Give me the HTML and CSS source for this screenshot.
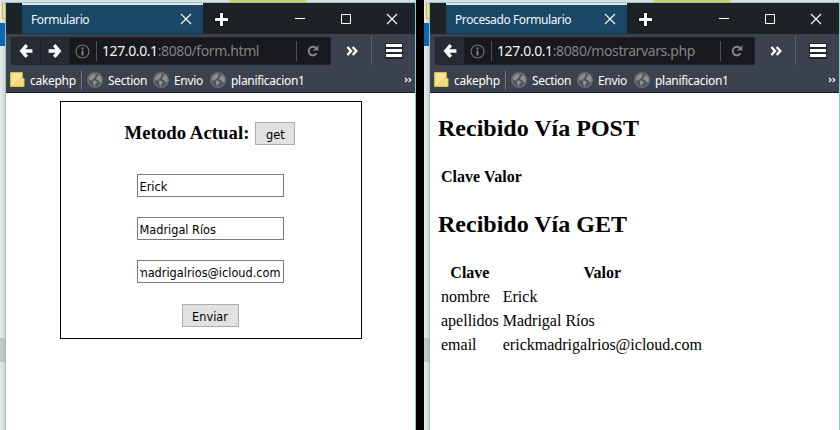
FILE: index.html
```html
<!DOCTYPE html>
<html lang="es">
<head>
<meta charset="utf-8">
<title>Formulario</title>
<link rel="stylesheet" href="styles.css">
</head>
<body>
<svg class="defs" width="0" height="0">
  <symbol id="close" viewBox="0 0 12 12"><path d="M1 1L11 11M11 1L1 11" fill="none" stroke="#fff" stroke-width="1.1"/></symbol>
  <symbol id="plus" viewBox="0 0 15 15"><path d="M7.5 0v15M0 7.5h15" fill="none" stroke="#0d1114" stroke-width="5"/><path d="M7.5 1v13M1 7.5h13" fill="none" stroke="#fff" stroke-width="3"/></symbol>
  <symbol id="min" viewBox="0 0 12 12"><path d="M1 5.5h10" stroke="#fff"/></symbol>
  <symbol id="max" viewBox="0 0 12 12"><path d="M1.5 1.5h9v9h-9z" fill="none" stroke="#fff"/></symbol>
  <symbol id="back" viewBox="0 0 14 14"><path d="M7.8 1.2L2.8 7l5 5.8M3 7h10.4" fill="none" stroke="#fff" stroke-width="3.4"/></symbol>
  <symbol id="info" viewBox="0 0 15 15"><circle cx="7.5" cy="7.5" r="6.5" fill="none" stroke="#777" stroke-width="1.1"/><path d="M7.5 6.5v5M7.5 3.6v1.8" stroke="#888" stroke-width="1.8"/></symbol>
  <symbol id="reload" viewBox="0 0 12 12"><path d="M9.6 8.3A4.3 4.3 0 1 1 8.6 2.6" fill="none" stroke="#848484" stroke-width="2"/><path d="M11.4 0v5.6H5.8z" fill="#848484"/></symbol>
  <symbol id="more" viewBox="0 0 12 10"><path d="M1.4 1L5 5 1.4 9M6.7 1L10.3 5 6.7 9" fill="none" stroke="#fff" stroke-width="2.4"/></symbol>
  <symbol id="more-thin" viewBox="0 0 8 6"><path d="M1 .8L3.2 3 1 5.2M4.6 .8L6.8 3 4.6 5.2" fill="none" stroke="#fff" stroke-width="1.2"/></symbol>
  <symbol id="menu" viewBox="0 0 18 16"><path d="M0 0h18v16H0z" fill="#23282f"/><path d="M1 2.5h16M1 7.5h16M1 12.5h16" stroke="#fff" stroke-width="3"/></symbol>
  <symbol id="folder" viewBox="0 0 15 16"><path d="M.5.5h11.8v6h1.7v8H.5z" fill="#f4e084" stroke="#d9bd4c"/><path d="M2 1.5h9v11L2 14z" fill="#f8e896"/><path d="M1 14L11 5v9z" fill="#eed36c" opacity=".7"/></symbol>
  <symbol id="globe" viewBox="0 0 16 16"><circle cx="8" cy="8" r="7.3" fill="#50555b" stroke="#787c80" stroke-width="1.1"/><path d="M2.5 5L5 2.4l3-.6L9 3 7.4 4.4l.4 1.7-2 .6L5 8.4 3 8 1.9 9zM6 8.5l3 .5 1 1.7-1.8 1.4-.4 2.3-1.7-2.3zM10 4.5l2.4-1.3 1.8 2.3.4 3.4-1.7 2.4-1-2.5-2-.8-.6-1.6z" fill="#8d9194"/></symbol>
</svg>

<div class="desktop">
  <section class="pane">
    <div class="window">
      <header class="titlebar">
        <div class="tab"><span>Formulario</span><svg width="12" height="12"><use href="#close"/></svg></div>
        <svg class="plus" width="15" height="15"><use href="#plus"/></svg>
        <div class="controls"><svg width="12" height="12"><use href="#min"/></svg><svg width="12" height="12"><use href="#max"/></svg><svg width="12" height="12"><use href="#close"/></svg></div>
      </header>
      <nav class="toolbar">
        <div class="location">
          <span class="navbtn"><svg width="14" height="14"><use href="#back"/></svg></span>
          <span class="navbtn"><svg class="flip" width="14" height="14"><use href="#back"/></svg></span>
          <svg class="info" width="15" height="15"><use href="#info"/></svg>
          <span class="url"><b>127.0.0.1</b>:8080/form.html</span>
          <span class="reload"><svg width="12" height="12"><use href="#reload"/></svg></span>
        </div>
        <svg class="more" width="12" height="10"><use href="#more"/></svg>
        <span class="menu"><svg width="18" height="16"><use href="#menu"/></svg></span>
      </nav>
      <div class="bookmarks">
        <svg width="15" height="16"><use href="#folder"/></svg><span class="b-cake">cakephp</span>
        <svg width="16" height="16"><use href="#globe"/></svg><span class="b-section">Section</span>
        <svg width="16" height="16"><use href="#globe"/></svg><span class="b-envio">Envio</span>
        <svg width="16" height="16"><use href="#globe"/></svg><span class="b-plan">planificacion1</span>
        <svg class="overflow" width="8" height="6"><use href="#more-thin"/></svg>
      </div>
      <main class="page">
        <div class="form">
          <h3><span>Metodo Actual:</span><span class="button get">get</span></h3>
          <div class="field">Erick</div>
          <div class="field">Madrigal Ríos</div>
          <div class="field"><div class="clip"><span>erickmadrigalrios@icloud.com</span></div></div>
          <span class="button send">Enviar</span>
        </div>
      </main>
    </div>
  </section>

  <section class="pane">
    <div class="window">
      <header class="titlebar">
        <div class="tab"><span>Procesado Formulario</span><svg width="12" height="12"><use href="#close"/></svg></div>
        <svg class="plus" width="15" height="15"><use href="#plus"/></svg>
        <div class="controls"><svg width="12" height="12"><use href="#min"/></svg><svg width="12" height="12"><use href="#max"/></svg><svg width="12" height="12"><use href="#close"/></svg></div>
      </header>
      <nav class="toolbar">
        <div class="location">
          <span class="navbtn"><svg width="14" height="14"><use href="#back"/></svg></span>
          <svg class="info" width="15" height="15"><use href="#info"/></svg>
          <span class="url"><b>127.0.0.1</b>:8080/mostrarvars.php</span>
          <span class="reload"><svg width="12" height="12"><use href="#reload"/></svg></span>
        </div>
        <svg class="more" width="12" height="10"><use href="#more"/></svg>
        <span class="menu"><svg width="18" height="16"><use href="#menu"/></svg></span>
      </nav>
      <div class="bookmarks">
        <svg width="15" height="16"><use href="#folder"/></svg><span class="b-cake">cakephp</span>
        <svg width="16" height="16"><use href="#globe"/></svg><span class="b-section">Section</span>
        <svg width="16" height="16"><use href="#globe"/></svg><span class="b-envio">Envio</span>
        <svg width="16" height="16"><use href="#globe"/></svg><span class="b-plan">planificacion1</span>
        <svg class="overflow" width="8" height="6"><use href="#more-thin"/></svg>
      </div>
      <main class="page result">
        <h2>Recibido Vía POST</h2>
        <table><tr><th>Clave</th><th>Valor</th></tr></table>
        <h2>Recibido Vía GET</h2>
        <table>
          <tr><th>Clave</th><th>Valor</th></tr>
          <tr><td>nombre</td><td>Erick</td></tr>
          <tr><td>apellidos</td><td>Madrigal Ríos</td></tr>
          <tr><td>email</td><td>erickmadrigalrios@icloud.com</td></tr>
        </table>
      </main>
    </div>
  </section>
</div>
</body>
</html>
```
FILE: styles.css
```css
* { box-sizing: border-box; }
body { margin: 0; width: 840px; height: 430px; overflow: hidden; background: #000; font-family: "Liberation Serif", serif; color: #000; }
.defs { position: absolute; }
svg { display: block; flex: none; }

.desktop { display: flex; gap: 8px; height: 430px; }
.pane {
  width: 416px; padding: 2px 0 0 5px;
  background:
    linear-gradient(#d0cd70, #d0cd70) 229px 0 / 78px 2px no-repeat,
    linear-gradient(90deg, #c9c9c9, #bdbdbd) 0 338px / 5px 24px no-repeat,
    linear-gradient(#1464b4, #1464b4) 0 23px / 5px 23px no-repeat,
    linear-gradient(#f3df80, #f3df80) 3px 4px / 2px 14px no-repeat,
    linear-gradient(#d5b643, #d5b643) 2px 3px / 3px 16px no-repeat,
    linear-gradient(90deg, #e9e9e9, #d5d5d5) 0 3px / 5px 427px no-repeat,
    #dcdfe0;
}
.window { height: 428px; border: 1px solid #80cbcb; border-bottom: 0; display: flex; flex-direction: column; }

.titlebar { height: 31px; background: #1d2226; display: flex; align-items: center; padding: 0 17px 0 16px; font: 12px "Noto Sans", sans-serif; letter-spacing: -.4px; color: #f2f6f8; }
.tab { width: 181px; height: 31px; background: #1a4766; border-top: 2px solid #dce9ef; border-bottom: 1px solid #173346; padding: 0 11px 0 9px; display: flex; align-items: center; justify-content: space-between; }
.plus { margin: 1px 0 0 11px; }
.controls { margin-left: auto; display: flex; gap: 34px; }

.toolbar { height: 31px; background: #3b424e; display: flex; align-items: center; padding: 0 12px 0 5px; }
.location { width: 320px; height: 28px; margin-top: 3px; background: #17191d; border: 1px solid #20242a; border-radius: 2px; display: flex; align-items: center; }
.navbtn { width: 29px; height: 26px; background: #262b33; border-right: 1px solid #1a1d22; display: flex; align-items: center; justify-content: center; }
.flip { transform: scaleX(-1); }
.info { margin: 0 6px 0 5px; }
.url { height: 20px; border-left: 1px solid #4d4f52; padding-left: 5px; font: 14px/20px "Noto Sans", sans-serif; letter-spacing: -.4px; color: #838383; white-space: nowrap; }
.url b { font-weight: 400; color: #f5f5f5; }
.reload { height: 20px; margin-left: auto; padding: 0 11px 0 10px; border-left: 1px solid #4d4f52; display: flex; align-items: center; }
.more { margin: 3px 0 0 15px; }
.menu { height: 31px; margin: 3px 0 0 auto; padding: 0 0 0 13px; border-left: 1px solid #59606b; display: flex; align-items: center; }

.bookmarks { height: 28px; background: #3b424e; border-bottom: 1px solid #15181c; display: flex; align-items: center; padding: 3px 3px 0 4px; font: 12px "Noto Sans", sans-serif; letter-spacing: -.3px; color: #fff; white-space: nowrap; }
.bookmarks span { margin: 0 6px 0 5px; }
.bookmarks .b-cake { width: 52px; height: 20px; margin: 0 5px 0 5px; line-height: 22px; border-right: 1px solid #6b717b; }
.bookmarks .b-section { width: 39px; }
.bookmarks .b-envio { width: 30px; }
.overflow { margin-left: auto; }

.page { flex: 1; background: #fff; padding: 8px; }
.form { width: 302px; height: 238px; margin: 0 0 0 46px; padding: 20px 2px 0 0; border: 1px solid #000; display: flex; flex-direction: column; align-items: center; }
h3 { margin: 0 0 29px; height: 23px; display: flex; gap: 6px; font-size: 18.72px; line-height: 22px; letter-spacing: .05px; }
.button, .field { height: 23px; font: 12.6px/23px "DejaVu Sans Condensed", "DejaVu Sans", sans-serif; letter-spacing: 0; }
.button { border: 1px solid #adadad; background: #e1e1e1; text-align: center; }
.get { width: 40px; }
.send { width: 57px; margin-top: 1px; }
.field { width: 147px; margin-bottom: 20px; border: 1px solid #7a7a7a; padding: 0 2px; white-space: nowrap; }
.clip { display: flex; justify-content: flex-end; overflow: hidden; }

.result { padding-top: 21px; }
h2 { margin: 0; font-size: 24px; line-height: 28px; }
table { margin: 22px 0 20px; border-spacing: 2px; font-size: 16px; line-height: 20px; }
th, td { padding: 1px; }
```
